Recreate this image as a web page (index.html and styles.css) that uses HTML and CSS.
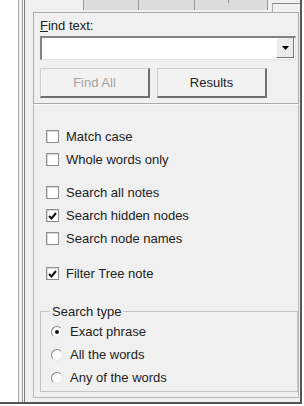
FILE: index.html
```html
<!DOCTYPE html>
<html>
<head>
  <title>Find</title>
  <link rel="stylesheet" href="styles.css">
</head>
<body>
  <div class="window">
    <div class="tree"></div>
    <div class="sash"></div>

    <div class="side">
      <div class="tabs">
        <div class="tab" style="width: 55px"></div>
        <div class="tab" style="width: 56px"></div>
        <div class="tab tab-split" style="width: 74px"></div>
        <div class="tab-current"></div>
      </div>

      <div class="find-section">
        <label class="find-label" for="findText"><u>F</u>ind text:</label>
        <div class="combo">
          <input type="text" id="findText" class="combo-input" />
          <div class="combo-button">
            <svg width="7" height="4" viewBox="0 0 7 4"><path d="M0 0h7L3.5 4z" fill="#000"/></svg>
          </div>
        </div>
        <div class="button-row">
          <button class="btn" disabled>Find All</button>
          <button class="btn">Results</button>
        </div>
      </div>

      <div class="options-section">
        <div class="check-group">
          <div class="check-row"><span class="check"></span>Match case</div>
          <div class="check-row"><span class="check"></span>Whole words only</div>
        </div>

        <div class="check-group group-gap">
          <div class="check-row"><span class="check"></span>Search all notes</div>
          <div class="check-row"><span class="check checked"><svg width="9" height="8" viewBox="0 0 9 8"><path d="M1 4l2.5 2.5L8 1" fill="none" stroke="#111" stroke-width="2"/></svg></span>Search hidden nodes</div>
          <div class="check-row"><span class="check"></span>Search node names</div>
        </div>

        <div class="check-group filter-gap">
          <div class="check-row"><span class="check checked"><svg width="9" height="8" viewBox="0 0 9 8"><path d="M1 4l2.5 2.5L8 1" fill="none" stroke="#111" stroke-width="2"/></svg></span>Filter Tree note</div>
        </div>

        <fieldset class="search-type">
          <legend>Search type</legend>
          <div class="radio-row"><span class="radio checked"></span>Exact phrase</div>
          <div class="radio-row"><span class="radio"></span>All the words</div>
          <div class="radio-row"><span class="radio"></span>Any of the words</div>
        </fieldset>
      </div>
    </div>
  </div>
</body>
</html>
```

FILE: styles.css
```css
body {
  margin: 0;
  background: #fff;
  font-family: "Liberation Sans", Arial, sans-serif;
  font-size: 13px;
  line-height: 15px;
  color: #222;
  width: 304px;
  height: 406px;
  overflow: hidden;
}
.window {
  width: 300px;
  height: 402px;
  display: flex;
  background: #f0f0f0;
  border-right: 2px solid #555;
  border-bottom: 2px solid #555;
}
.tree {
  width: 18px;
  background: #fff;
  border-right: 1px solid #a8a8a8;
}
.sash {
  width: 1px;
  margin-left: 3px;
  background: #f4f4f4;
  border-left: 1px solid #a0a0a0;
  border-right: 1px solid #7c7c7c;
}
.side {
  flex: 1;
  margin: 0 1px 4px 8px;
  display: flex;
  flex-direction: column;
}

/* tab strip above the panel */
.tabs {
  height: 12px;
  display: flex;
  padding-left: 50px;
}
.tab {
  height: 10px;
  background: #dcdcdc;
  border-left: 1px solid #999;
  box-sizing: border-box;
}
.tab-split {
  background: linear-gradient(#999, #999) 33px 0 / 1px 3px no-repeat, #dcdcdc;
  border-right: 1px solid #999;
}
.tab-current {
  width: 27px;
  margin: 3px -3px 0 4px;
  border-top: 1px solid #888;
  border-left: 1px solid #aaa;
  border-right: 1px solid #555;
}

.find-section {
  border: 1px solid #a9a9a9;
  padding: 5px 2px 5px 6px;
}
.find-label {
  display: block;
}
.combo {
  display: flex;
  height: 24px;
  margin-top: 3px;
  box-sizing: border-box;
  background: #fff;
  border: 1px solid #e3e3e3;
  border-top: 2px solid #828282;
  border-left: 2px solid #828282;
}
.combo-input {
  flex: 1;
  border: none;
  outline: none;
  padding: 0 4px;
  font: inherit;
  background: transparent;
}
.combo-button {
  width: 16px;
  margin: 0 1px 1px 0;
  background: #ececec;
  border-right: 1px solid #777;
  border-bottom: 1px solid #777;
  border-left: 1px solid #fff;
  display: flex;
  align-items: center;
  justify-content: center;
}
.button-row {
  display: flex;
  gap: 7px;
  margin-top: 8px;
}
.btn {
  width: 110px;
  height: 30px;
  font: inherit;
  color: #222;
  background: #f2f2f2;
  border: 1px solid #cfcfcf;
  border-right: 2px solid #6f6f6f;
  border-bottom: 2px solid #6f6f6f;
  padding: 0;
}
.btn:disabled {
  color: #a2a2a2;
}

.options-section {
  flex: 1;
  border: 1px solid #b9b9b9;
  border-top: 1px solid #f8f8f8;
  padding: 20px 0 0 6px;
}
.check-group {
  padding-left: 6px;
}
.group-gap {
  margin-top: 10px;
}
.filter-gap {
  margin-top: 12px;
}
.check-row, .radio-row {
  height: 23px;
  display: flex;
  align-items: center;
  gap: 7px;
}
.check {
  width: 13px;
  height: 13px;
  box-sizing: border-box;
  border: 1px solid #8e8f8f;
  background: #fff;
  box-shadow: inset 1px 1px 0 #d8d8d8;
  display: flex;
  align-items: center;
  justify-content: center;
}

.search-type {
  margin: 19px 0 0 0;
  padding: 1px 0 2px 9px;
  border: 1px solid #c4c4c4;
}
.search-type legend {
  padding: 0 2px;
}
.radio-row {
  padding-left: 1px;
}
.radio {
  width: 12px;
  height: 12px;
  box-sizing: border-box;
  border-radius: 50%;
  border: 1px solid;
  border-color: #8a8a8a #e6e6e6 #e6e6e6 #8a8a8a;
  background: #fbfbfb;
  display: flex;
  align-items: center;
  justify-content: center;
}
.radio.checked::after {
  content: "";
  width: 4px;
  height: 4px;
  border-radius: 50%;
  background: #111;
}
```
